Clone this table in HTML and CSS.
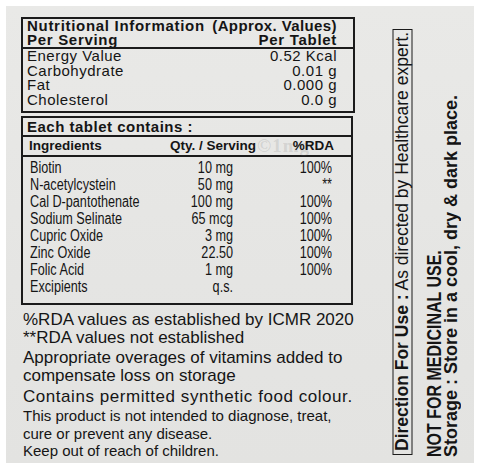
FILE: index.html
```html
<!DOCTYPE html>
<html lang="en">
<head>
<meta charset="utf-8">
<title>Nutritional Information</title>
<link rel="stylesheet" href="styles.css">
</head>
<body>
<div class="label">
  <div class="main">
    <section class="nutri">
      <div class="nutri-head">
        <div class="hrow"><span>Nutritional Information</span><span class="approx">(Approx. Values)</span></div>
        <div class="hrow"><span>Per Serving</span><span>Per Tablet</span></div>
      </div>
      <div class="nutri-body">
        <div class="nrow"><span>Energy Value</span><span>0.52 Kcal</span></div>
        <div class="nrow"><span>Carbohydrate</span><span>0.01 g</span></div>
        <div class="nrow"><span>Fat</span><span>0.000 g</span></div>
        <div class="nrow"><span>Cholesterol</span><span>0.0 g</span></div>
      </div>
    </section>

    <section class="ingr">
      <div class="ingr-title">Each tablet contains :</div>
      <div class="ingr-head">
        <span class="ih-name">Ingredients</span>
        <span class="ih-qty">Qty. / Serving</span>
        <span class="ih-rda">%RDA</span>
        <span class="wm">©1mg</span>
      </div>
      <div class="ingr-body">
        <span class="n">Biotin</span><span class="q">10 mg</span><span class="r">100%</span>
        <span class="n">N-acetylcystein</span><span class="q">50 mg</span><span class="r">**</span>
        <span class="n">Cal D-pantothenate</span><span class="q">100 mg</span><span class="r">100%</span>
        <span class="n">Sodium Selinate</span><span class="q">65 mcg</span><span class="r">100%</span>
        <span class="n">Cupric Oxide</span><span class="q">3 mg</span><span class="r">100%</span>
        <span class="n">Zinc Oxide</span><span class="q">22.50</span><span class="r">100%</span>
        <span class="n">Folic Acid</span><span class="q">1 mg</span><span class="r">100%</span>
        <span class="n">Excipients</span><span class="q">q.s.</span><span class="r"></span>
      </div>
    </section>

    <div class="notes">
      <p class="p1">%RDA values as established by ICMR 2020<br>**RDA values not established</p>
      <p class="p2">Appropriate overages of vitamins added to<br>compensate loss on storage</p>
      <p class="p3">Contains permitted synthetic food colour.</p>
      <p class="p4">This product is not intended to diagnose, treat,<br>cure or prevent any disease.<br>Keep out of reach of children.</p>
    </div>
  </div>

  <div class="side">
    <div class="direction"><b>Direction For Use :</b> As directed by Healthcare expert.</div>
    <div class="warn">
      <div class="w1">NOT FOR MEDICINAL USE.</div>
      <div class="w2">Storage : Store in a cool, dry &amp; dark place.</div>
    </div>
  </div>
</div>
</body>
</html>
```

FILE: styles.css
```css
* { box-sizing: border-box; }

html, body {
  margin: 0;
  padding: 0;
  background: #ffffff;
}

body {
  font-family: "Liberation Sans", Arial, sans-serif;
  color: #151515;
}

.label {
  margin: 6px;
  width: 468px;
  height: 457px;
  background: linear-gradient(180deg, #e9e9e7 0%, #e5e5e3 60%, #e3e3e1 100%);
  display: flex;
  overflow: hidden;
}

.main {
  width: 349px;
  padding: 11px 0 0 15px;
  flex: none;
}

/* ---------- Nutrition table ---------- */
.nutri {
  width: 334px;
  border: 2px solid #1b1b1b;
}

.nutri-head {
  padding: 0 16px 0 4px;
  border-bottom: 2px solid #1b1b1b;
  font-weight: bold;
  font-size: 15px;
  letter-spacing: 0.7px;
  line-height: 14px;
}

.hrow {
  display: flex;
  justify-content: space-between;
}

.approx { letter-spacing: 0.4px; }

.nutri-body {
  padding: 0 16px 4px 4px;
  font-size: 15px;
  letter-spacing: 0.5px;
  line-height: 14.5px;
}

.nrow {
  display: flex;
  justify-content: space-between;
}

/* ---------- Ingredient table ---------- */
.ingr {
  width: 332px;
  margin-top: 3px;
  border: 2px solid #1b1b1b;
}

.ingr-title {
  padding-left: 4px;
  font-weight: bold;
  font-size: 15px;
  letter-spacing: 0.5px;
  line-height: 17px;
  border-bottom: 2px solid #1b1b1b;
}

.ingr-head {
  position: relative;
  display: flex;
  padding: 0 17px 0 6px;
  font-weight: bold;
  font-size: 13.5px;
  line-height: 18px;
  border-bottom: 2px solid #1b1b1b;
}

.ih-name { width: 141px; }
.ih-rda { margin-left: auto; position: relative; z-index: 1; }
.ih-qty { position: relative; z-index: 1; }

.wm {
  position: absolute;
  left: 234px;
  top: 0;
  font-family: "Liberation Serif", serif;
  font-size: 19px;
  font-weight: bold;
  color: rgba(110, 110, 110, 0.18);
  letter-spacing: 1px;
}

.ingr-body {
  display: grid;
  grid-template-columns: 133px 70px 99px;
  padding: 2px 19px 8px 7px;
  font-size: 16px;
  line-height: 17px;
}

.ingr-body span {
  display: block;
  white-space: nowrap;
  transform: scaleX(0.79);
}

.ingr-body .n { transform-origin: left center; }

.ingr-body .q,
.ingr-body .r {
  text-align: right;
  transform-origin: right center;
}

/* ---------- Notes ---------- */
.notes {
  padding-left: 2px;
  font-size: 17px;
}

.notes p { margin: 0; }

.p1 { margin-top: 6px !important; line-height: 18px; }
.p2 { margin-top: 2px !important; line-height: 17.5px; }
.p3 { margin-top: 4px !important; line-height: 18px; letter-spacing: 0.55px; }
.p4 { margin-top: 1px !important; font-size: 15px; line-height: 17.5px; }

/* ---------- Side (rotated) ---------- */
.side {
  flex: 1;
  display: flex;
  align-items: flex-end;
}

.direction {
  margin-left: 38px;
  margin-bottom: 8px;
  height: 426px;
  width: 19.5px;
  border: 1.5px solid #1b1b1b;
  writing-mode: vertical-rl;
  transform: rotate(180deg);
  padding-top: 3px;
  font-size: 17.5px;
  line-height: 16.5px;
  white-space: nowrap;
}

.direction b { font-weight: bold; }

.warn {
  margin-left: 14.5px;
  margin-bottom: 6px;
  height: 380px;
  writing-mode: vertical-rl;
  transform: rotate(180deg);
  font-weight: bold;
  white-space: nowrap;
}

.w1 {
  font-size: 16px;
  line-height: 16px;
  transform: scaleX(1.22);
}

.w2 { font-size: 18px; line-height: 17px; }
```
